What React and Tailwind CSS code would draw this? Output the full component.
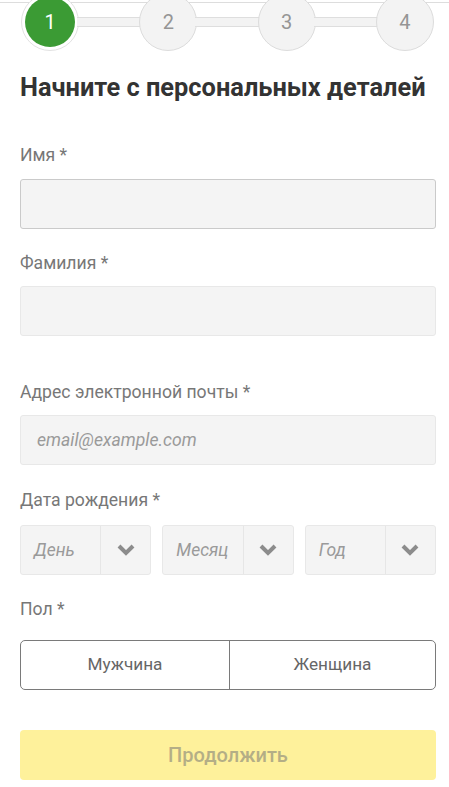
import React from 'react';

function Step({ n, active }) {
  if (active) {
    return (
      <div className="w-[58px] h-[58px] rounded-full bg-white border border-[#e2e2e2] flex items-center justify-center shrink-0">
        <div className="w-[50px] h-[50px] rounded-full bg-[#3b9b34] text-white text-[20px] flex items-center justify-center">
          {n}
        </div>
      </div>
    );
  }
  return (
    <div className="w-[58px] h-[58px] rounded-full bg-[#f3f3f3] border border-[#dcdcdc] text-[#959595] text-[20px] flex items-center justify-center shrink-0">
      {n}
    </div>
  );
}

function Connector() {
  return <div className="flex-1 h-[10px] bg-[#f3f3f3] border-y border-[#dedede] -mx-[2px]" />;
}

function Label({ children }) {
  return <div className="text-[17.6px] text-[#777] leading-[22px]">{children}</div>;
}

function Chevron() {
  return (
    <svg width="18" height="12" viewBox="0 0 18 12">
      <polyline points="2,2 9,9 16,2" fill="none" stroke="#8c8c8c" strokeWidth="4" strokeLinejoin="miter" />
    </svg>
  );
}

function DateSelect({ placeholder }) {
  return (
    <div className="flex-1 h-[50px] bg-[#f4f4f4] border border-[#e8e8e8] rounded-[3px] flex">
      <div className="flex-1 flex items-center pl-[13px] italic text-[17.5px] text-[#9a9a9a]">{placeholder}</div>
      <div className="w-[50px] border-l border-[#e6e6e6] flex items-center justify-center">
        <Chevron />
      </div>
    </div>
  );
}

export default function App() {
  return (
    <div className="w-[449px] h-[787px] bg-white overflow-hidden font-['Roboto',sans-serif] relative">
      <div className="absolute top-[2px] left-0 right-0 h-px bg-[#dddddd]" />
      <div className="relative flex items-center pl-[21px] pr-[15px] -mt-[7px]">
        <Step n="1" active />
        <Connector />
        <Step n="2" />
        <Connector />
        <Step n="3" />
        <Connector />
        <Step n="4" />
      </div>

      <div className="pl-[20px] pr-[13px]">
        <h1 className="mt-[20px] text-[25.4px] font-bold text-[#333] leading-[32px] whitespace-nowrap">
          Начните с персональных деталей
        </h1>

        <div className="mt-[41px]"><Label>Имя *</Label></div>
        <div className="mt-[13px] h-[50px] bg-[#f4f4f4] border border-[#cacaca] rounded-[3px]" />

        <div className="mt-[23px]"><Label>Фамилия *</Label></div>
        <div className="mt-[12px] h-[50px] bg-[#f4f4f4] border border-[#e8e8e8] rounded-[3px]" />

        <div className="mt-[45px]"><Label>Адрес электронной почты *</Label></div>
        <div className="mt-[12px] h-[50px] bg-[#f4f4f4] border border-[#e8e8e8] rounded-[3px] flex items-center pl-[16px] italic text-[17.6px] text-[#9a9a9a]">
          email@example.com
        </div>

        <div className="mt-[24px]"><Label>Дата рождения *</Label></div>
        <div className="mt-[14px] flex gap-[11px]">
          <DateSelect placeholder="День" />
          <DateSelect placeholder="Месяц" />
          <DateSelect placeholder="Год" />
        </div>

        <div className="mt-[23px]"><Label>Пол *</Label></div>
        <div className="mt-[20px] h-[50px] border border-[#7a7a7a] rounded-[5px] flex text-[17.2px] text-[#666]">
          <div className="w-[209px] flex items-center justify-center border-r border-[#7a7a7a]">Мужчина</div>
          <div className="flex-1 flex items-center justify-center">Женщина</div>
        </div>

        <div className="mt-[40px] h-[50px] bg-[#fef19b] rounded-[4px] flex items-center justify-center text-[20px] font-medium text-[#b4ae86]">
          Продолжить
        </div>
      </div>
    </div>
  );
}
